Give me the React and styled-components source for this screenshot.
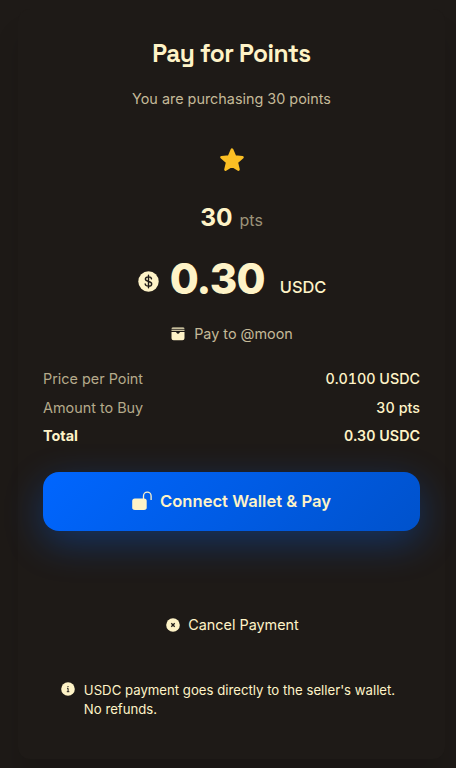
import * as React from "react";
import styled, { createGlobalStyle } from "styled-components";

const GlobalStyle = createGlobalStyle`
  * {
    box-sizing: border-box;
  }
  body {
    margin: 0;
    background: #1e1a17;
    color: #fef3c7;
    font-family: Inter, "Liberation Sans", sans-serif;
    overflow: hidden;
  }
`;

const Page = styled.main`
  height: 768px;
  padding: 9px 11px 9px 18px;
  background: #1e1a17;
`;

const Card = styled.section`
  display: flex;
  flex-direction: column;
  align-items: center;
  height: 750px;
  padding: 27px 25px 0;
  border-radius: 12px;
  background: #1e1a17;
  box-shadow: 0 25px 25px rgba(0, 0, 0, 0.13);
`;

const Title = styled.h1`
  margin: 0;
  height: 36px;
  line-height: 36px;
  font-family: "Space Grotesk", Inter, sans-serif;
  font-size: 24.5px;
  font-weight: 600;
  letter-spacing: -0.52px;
  white-space: nowrap;
`;

const Subtitle = styled.p`
  margin: 16px 0 0;
  line-height: 22px;
  font-size: 14.4px;
  color: #c4b998;
`;

const StarWrap = styled.div`
  margin-top: 37px;
  height: 28px;
`;

const Points = styled.div`
  display: flex;
  align-items: baseline;
  gap: 7px;
  margin-top: 23px;
  line-height: 38px;
`;

const PointsValue = styled.span`
  font-size: 24.5px;
  font-weight: 700;
`;

const PointsUnit = styled.span`
  font-size: 16px;
  color: #9c9279;
`;

const Price = styled.div`
  display: flex;
  align-items: center;
  margin-top: 12px;
  padding-left: 1px;
  height: 60px;
`;

const Amount = styled.span`
  margin: 0 15px 5px 11px;
  line-height: 60px;
  font-size: 42px;
  font-weight: 800;
  letter-spacing: -0.8px;
`;

const Currency = styled.span`
  padding-top: 11px;
  font-size: 16.4px;
  font-weight: 500;
`;

const Recipient = styled.div`
  display: flex;
  align-items: center;
  gap: 9px;
  margin-top: 12px;
  height: 22px;
  padding-left: 1px;
  font-size: 14.4px;
  line-height: 22px;
  color: #c4b998;
`;

const Details = styled.dl`
  width: 100%;
  margin: 20px 0 0;
`;

const DetailRow = styled.div`
  display: flex;
  justify-content: space-between;
  height: 28.7px;
  line-height: 28px;
  font-size: 14.4px;
`;

const DetailLabel = styled.dt`
  color: ${(props) => (props.$total ? "#fef3c7" : "#b5aa8b")};
  font-weight: ${(props) => (props.$total ? 700 : 400)};
`;

const DetailValue = styled.dd`
  margin: 0;
  font-size: 14.3px;
  font-weight: ${(props) => (props.$total ? 600 : 500)};
  font-variant-numeric: tabular-nums;
`;

const PayButton = styled.button`
  display: flex;
  align-items: center;
  justify-content: center;
  gap: 8px;
  width: 100%;
  height: 59px;
  flex: none;
  margin-top: 21px;
  padding: 0 0 1px;
  border: 0;
  border-radius: 16px;
  background: linear-gradient(135deg, #0066ff, #0052cc);
  box-shadow: 0 12px 38px rgba(0, 102, 255, 0.33);
  color: #fef3c7;
  font: 600 16.6px Inter, sans-serif;
  cursor: pointer;
`;

const CancelButton = styled.button`
  display: flex;
  align-items: center;
  gap: 8px;
  height: 24px;
  margin-top: 82px;
  padding: 0 0 1px 2px;
  border: 0;
  background: none;
  color: #fef3c7;
  font: 400 14.4px Inter, sans-serif;
  cursor: pointer;

  svg {
    margin-top: 1px;
  }
`;

const Notice = styled.div`
  display: flex;
  gap: 9px;
  margin-top: 44px;
  padding-right: 7px;
  font-size: 13.2px;
  line-height: 19px;

  svg {
    margin-top: 1px;
  }
`;

const NoticeText = styled.p`
  margin: 0;
  white-space: nowrap;
`;

const Icon = styled.svg`
  display: block;
  flex: none;
  fill: #fef3c7;
`;

const dark = "#1e1a17";

const StarIcon = () => (
  <Icon width="26" height="26" viewBox="0 0 26 26">
    <path
      d="M13 2.6 16 9.5 23.5 10.2 17.8 15.2 19.5 22.6 13 18.7 6.5 22.6 8.2 15.2 2.5 10.2 10 9.5Z"
      fill="#fbbf24"
      stroke="#fbbf24"
      strokeWidth="2.6"
      strokeLinejoin="round"
    />
  </Icon>
);

const DollarIcon = () => (
  <Icon width="21" height="21" viewBox="0 0 21 21">
    <circle cx="10.5" cy="10.5" r="10.2" />
    <path
      d="M10.5 4.2v12.6M13.5 7.8c-.2-1.3-1.4-1.9-3-1.9-1.8 0-3.1.8-3.1 2.2 0 3.4 6.3 1.4 6.3 4.8 0 1.4-1.4 2.2-3.2 2.2s-3.1-.8-3.3-2.1"
      fill="none"
      stroke={dark}
      strokeWidth="1.4"
      strokeLinecap="round"
    />
  </Icon>
);

const WalletIcon = () => (
  <Icon width="14" height="14" viewBox="0 0 14 14">
    <path d="M2 .5h10q1.5 0 1.5 1.2H.5Q.5.5 2 .5ZM.5 2.7h13v1H.5ZM.5 5h4.3c.4 0 .5.3.7.7.3.7.8 1 1.5 1s1.2-.3 1.5-1c.2-.4.3-.7.7-.7h4.3v6.2a2.1 2.1 0 0 1-2.1 2.1H2.6a2.1 2.1 0 0 1-2.1-2.1Z" />
  </Icon>
);

const UnlockIcon = () => (
  <Icon width="20" height="20" viewBox="0 0 20 20">
    <rect x="0.2" y="7.5" width="14.5" height="11.5" rx="2.6" />
    <path
      d="M11.5 8V5a3.8 3.8 0 0 1 7.6 0v4"
      fill="none"
      stroke="#fef3c7"
      strokeWidth="1.3"
    />
  </Icon>
);

const CancelIcon = () => (
  <Icon width="14" height="14" viewBox="0 0 14 14">
    <circle cx="7" cy="7" r="6.8" />
    <path d="m5.3 5.3 3.4 3.4M8.7 5.3 5.3 8.7" stroke={dark} strokeWidth="1.3" />
  </Icon>
);

const InfoIcon = () => (
  <Icon width="14" height="14" viewBox="0 0 14 14">
    <circle cx="7" cy="7" r="6.8" />
    <path
      d="M6 6.3h1.1v3.2M5.8 9.7h2.5M7 4v1.1"
      fill="none"
      stroke={dark}
      strokeWidth="1"
    />
  </Icon>
);

const details = [
  { label: "Price per Point", value: "0.0100 USDC" },
  { label: "Amount to Buy", value: "30 pts" },
  { label: "Total", value: "0.30 USDC", total: true },
];

function App() {
  return (
    <Page>
      <GlobalStyle />
      <Card>
        <Title>Pay for Points</Title>
        <Subtitle>You are purchasing 30 points</Subtitle>
        <StarWrap>
          <StarIcon />
        </StarWrap>
        <Points>
          <PointsValue>30</PointsValue>
          <PointsUnit>pts</PointsUnit>
        </Points>
        <Price>
          <DollarIcon />
          <Amount>0.30</Amount>
          <Currency>USDC</Currency>
        </Price>
        <Recipient>
          <WalletIcon />
          <span>Pay to @moon</span>
        </Recipient>
        <Details>
          {details.map((row) => (
            <DetailRow key={row.label}>
              <DetailLabel $total={row.total}>{row.label}</DetailLabel>
              <DetailValue $total={row.total}>{row.value}</DetailValue>
            </DetailRow>
          ))}
        </Details>
        <PayButton>
          <UnlockIcon />
          <span>Connect Wallet &amp; Pay</span>
        </PayButton>
        <CancelButton>
          <CancelIcon />
          <span>Cancel Payment</span>
        </CancelButton>
        <Notice>
          <InfoIcon />
          <NoticeText>
            USDC payment goes directly to the seller's wallet.
            <br />
            No refunds.
          </NoticeText>
        </Notice>
      </Card>
    </Page>
  );
}

export default App;
